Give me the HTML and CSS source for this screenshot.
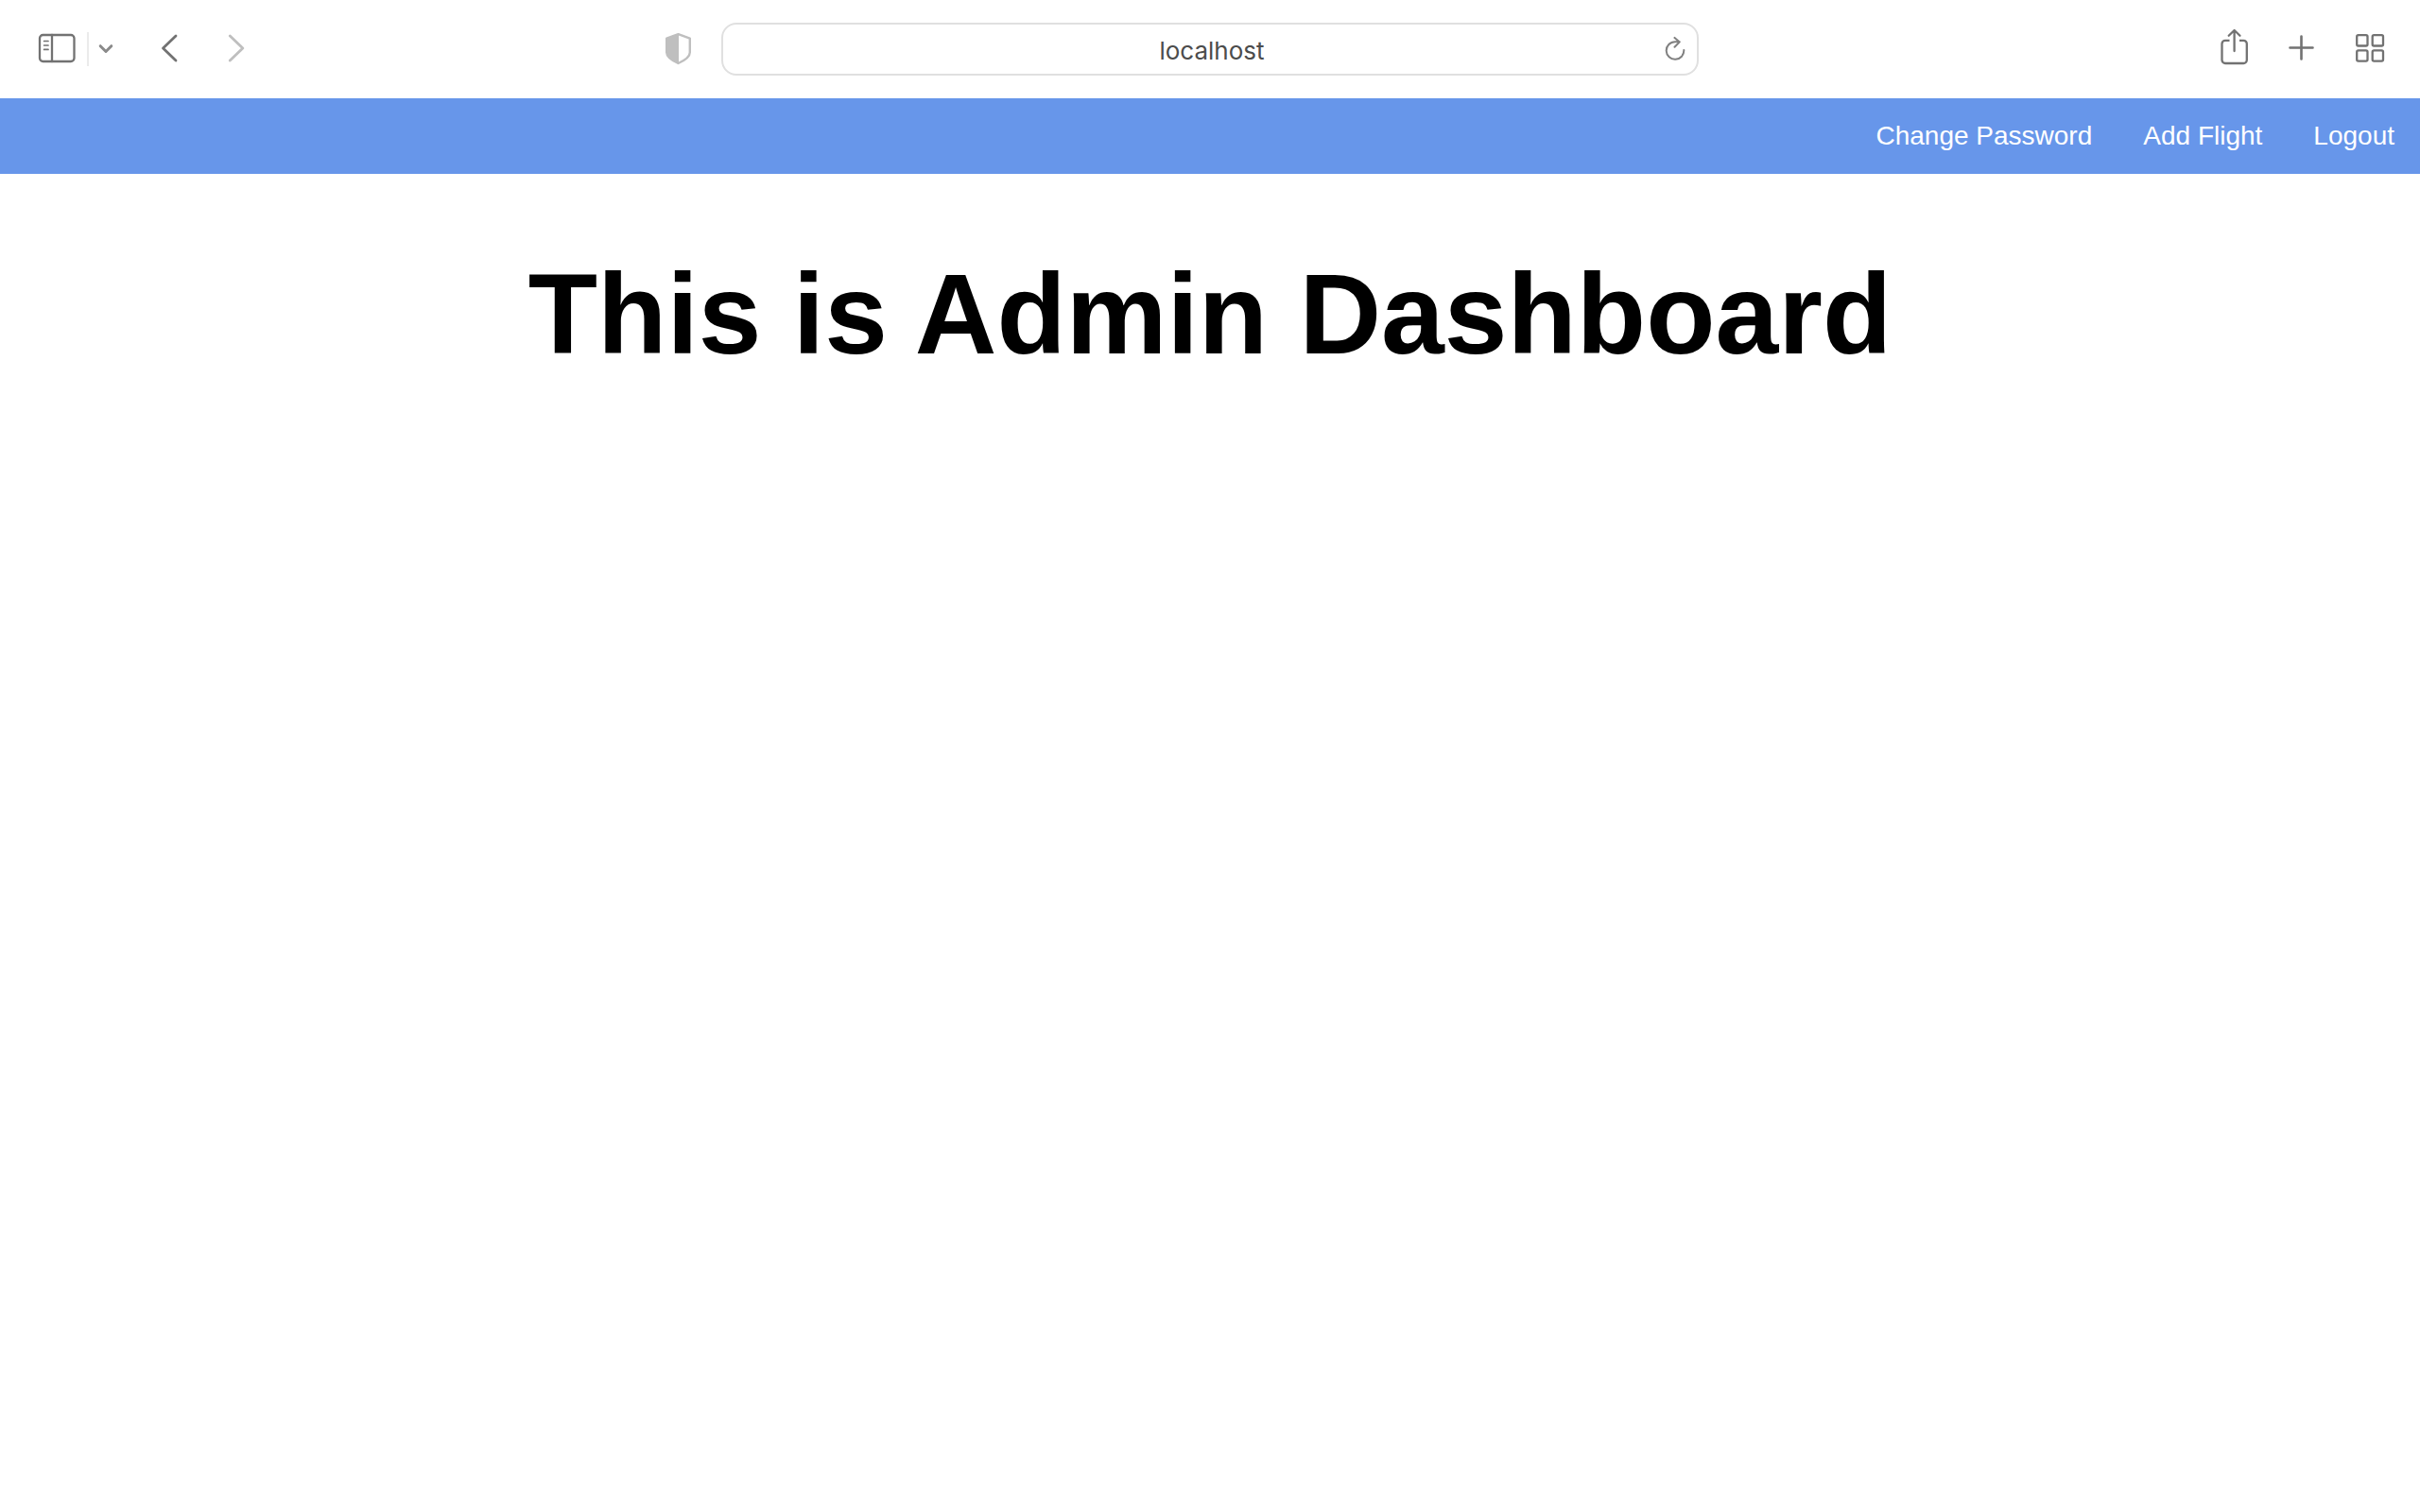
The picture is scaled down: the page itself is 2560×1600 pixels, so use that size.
FILE: index.html
```html
<!DOCTYPE html>
<html lang="en">
<head>
<meta charset="utf-8">
<title>Admin Dashboard</title>
<link rel="stylesheet" href="styles.css">
</head>
<body>
<header class="toolbar">
  <div class="toolbar-start">
    <button class="tool" type="button" aria-label="Show sidebar">
      <svg width="40" height="48" viewBox="0 0 40 48"><rect x="2" y="9" width="36.500" height="28" rx="3.500"/><path d="M15 9v28"/><path class="thin" d="M6.600 15.500h4.400M6.600 20h4.400M6.600 24.400h4.400"/></svg>
    </button>
    <span class="divider"></span>
    <button class="tool tool-menu" type="button" aria-label="Tab groups">
      <svg width="16" height="48" viewBox="0 0 16 48"><path class="chevron" d="M2.200 20.700L8 26.500l5.800-5.800"/></svg>
    </button>
    <button class="tool tool-nav" type="button" aria-label="Back">
      <svg width="24" height="48" viewBox="0 0 24 48"><path class="arrow" d="M18 10L4.500 23 18 36"/></svg>
    </button>
    <button class="tool tool-nav faded" type="button" aria-label="Forward">
      <svg width="24" height="48" viewBox="0 0 24 48"><path class="arrow" d="M3.300 10L16.800 23 3.300 36"/></svg>
    </button>
    <button class="tool tool-shield" type="button" aria-label="Privacy report">
      <svg width="32" height="48" viewBox="0 0 32 48"><path class="shield-line" d="M14.500 8.200L26.800 12.600V27.500C26.800 32.500 22 35.600 14.500 39C7 35.600 2.200 32.500 2.200 27.500V12.600Z"/><path class="shield-fill" d="M15 8.200L2.200 12.600V27.500C2.200 32.500 7 35.600 15 39Z"/></svg>
    </button>
  </div>
  <div class="address">
    <input class="address-input" type="text" value="localhost" aria-label="Address">
    <button class="tool" type="button" aria-label="Reload">
      <svg width="24" height="48" viewBox="0 0 24 48"><path class="reload" d="M20.300 24.900A9.300 9.300 0 1 1 11 16.200h4.800M10.500 11.900l5.300 4.500-5.300 5.300"/></svg>
    </button>
  </div>
  <div class="toolbar-end">
    <button class="tool" type="button" aria-label="Share">
      <svg width="32" height="48" viewBox="0 0 32 48"><path d="M10.500 14.800H6a3.500 3.500 0 0 0-3.500 3.500V35.500a3.500 3.500 0 0 0 3.500 3.500H25.300a3.500 3.500 0 0 0 3.500-3.500V18.300a3.500 3.500 0 0 0-3.500-3.500H21" stroke-linecap="butt"/><path d="M15.600 26V4.500M9.700 9.800L15.600 4l5.900 5.800"/></svg>
    </button>
    <button class="tool" type="button" aria-label="New tab">
      <svg width="32" height="48" viewBox="0 0 32 48"><path class="plus" d="M2.500 22.500h24M14.500 10.500v24"/></svg>
    </button>
    <button class="tool" type="button" aria-label="Tab overview">
      <svg width="32" height="48" viewBox="0 0 32 48"><rect x="1.200" y="9.200" width="11.300" height="11.300" rx="1.600"/><rect x="17.700" y="9.200" width="11.300" height="11.300" rx="1.600"/><rect x="1.200" y="25.400" width="11.300" height="11.300" rx="1.600"/><rect x="17.700" y="25.400" width="11.300" height="11.300" rx="1.600"/></svg>
    </button>
  </div>
</header>
<nav class="menu">
  <a class="menu-link" href="#password">Change Password</a>
  <a class="menu-link" href="#flight">Add Flight</a>
  <a class="menu-link" href="#logout">Logout</a>
</nav>
<main class="content">
  <h1 class="title">This is Admin Dashboard</h1>
</main>
</body>
</html>
```
FILE: styles.css
```css
* {
  box-sizing: border-box;
}

body {
  margin: 0;
  background: #fff;
  color: #000;
  font-family: "Liberation Sans", Arial, sans-serif;
}

.toolbar {
  display: grid;
  grid-template-columns: 1fr minmax(200px, 1034px) 1fr;
  align-items: center;
  height: 104px;
}

.toolbar-start,
.toolbar-end {
  display: flex;
  align-items: center;
}

.toolbar-start {
  padding: 0 28px 0 40px;
}

.toolbar-end {
  justify-content: flex-end;
  gap: 40px;
  padding-right: 36px;
}

.tool {
  display: flex;
  padding: 0;
  border: 0;
  background: none;
  color: #727272;
}

.tool svg {
  display: block;
  fill: none;
  stroke: currentColor;
  stroke-width: 2.3;
  stroke-linecap: round;
  stroke-linejoin: round;
}

.tool .thin {
  stroke-width: 1.7;
}

.tool .chevron {
  stroke: #8a8a8a;
  stroke-width: 3;
}

.tool .arrow {
  stroke-width: 2.8;
}

.tool .plus {
  stroke-width: 2.6;
}

.tool .reload {
  stroke: #808080;
  stroke-width: 2;
}

.tool .shield-line {
  stroke-width: 2.4;
}

.tool .shield-fill {
  fill: currentColor;
  stroke: none;
}

.divider {
  width: 2px;
  height: 36px;
  margin: 0 10px 0 12px;
  background: #ebebeb;
}

.tool-nav {
  margin-left: 48px;
}

.faded,
.tool-shield {
  color: #bfbfbf;
}

.tool-shield {
  margin-left: auto;
}

.address {
  display: flex;
  align-items: center;
  height: 56px;
  padding: 0 10px 0 36px;
  border: 2px solid #e0e0e0;
  border-radius: 16px;
}

.address-input {
  flex: 1;
  min-width: 0;
  height: 48px;
  padding: 2px 0 0 2px;
  border: 0;
  outline: 0;
  background: none;
  color: #4c4c4c;
  font: 26px/32px Inter, sans-serif;
  text-align: center;
}

.menu {
  display: flex;
  justify-content: flex-end;
  gap: 54px;
  padding: 24px 27px;
  background: #6796ea;
}

.menu-link {
  color: #fff;
  font-size: 28px;
  line-height: 32px;
  text-decoration: none;
}

.content {
  padding: 80px 16px;
}

.title {
  margin: 0;
  font-size: 120px;
  line-height: 136px;
  text-align: center;
}
```
